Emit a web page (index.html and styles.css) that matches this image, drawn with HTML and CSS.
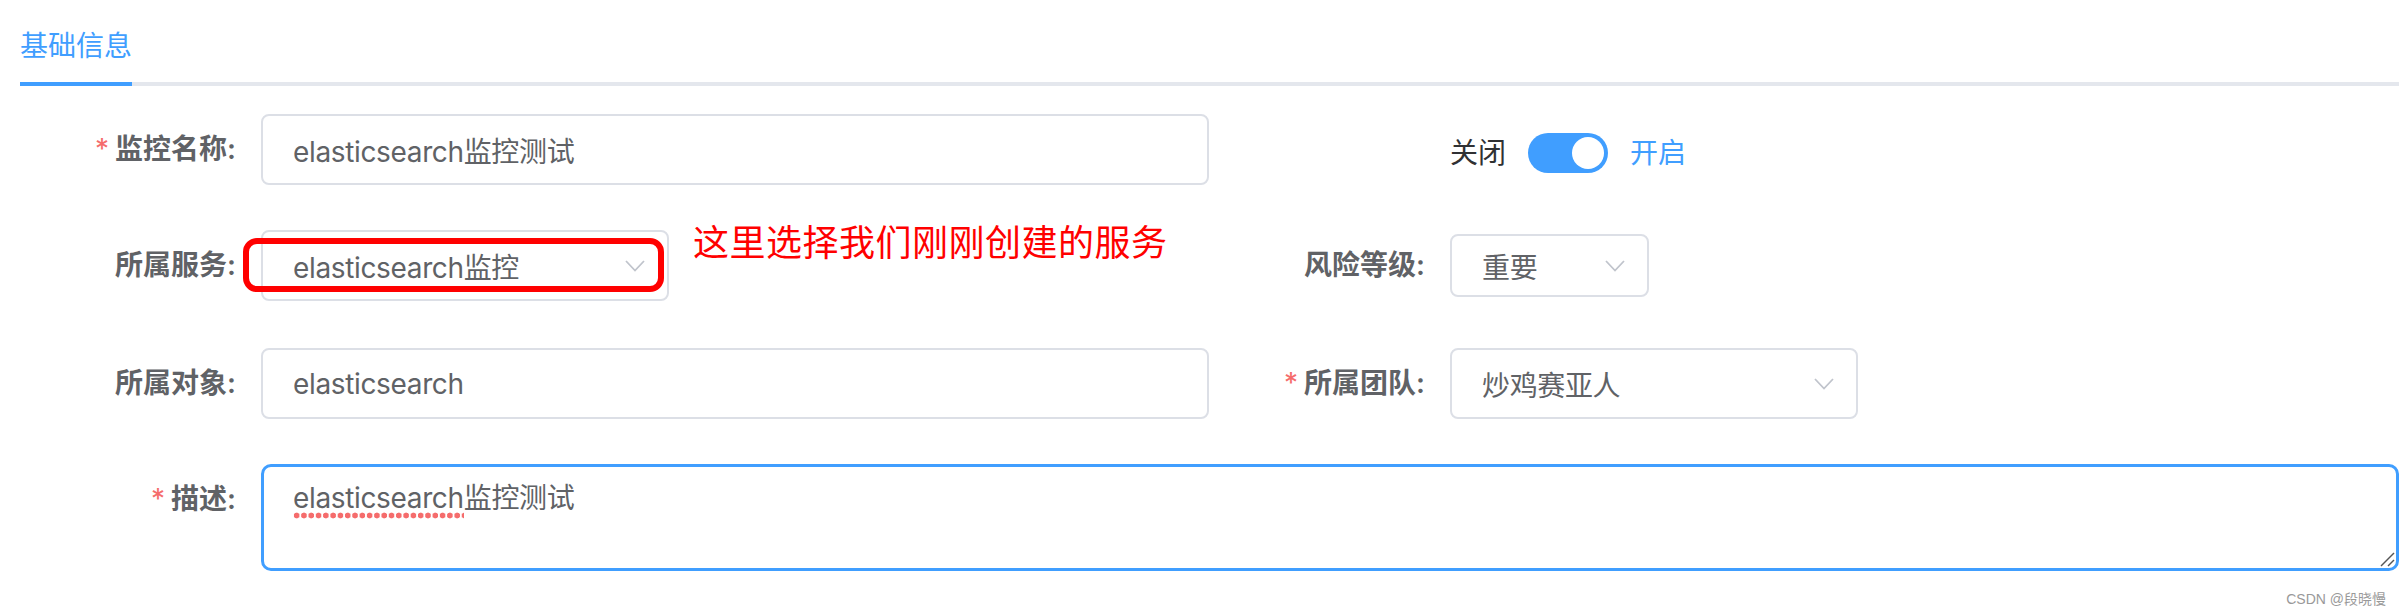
FILE: index.html
```html
<!DOCTYPE html>
<html lang="zh">

<head>
    <meta charset="utf-8">
    <title>监控配置</title>
    <link rel="stylesheet" href="styles.css">
</head>

<body>
    <div class="page">
        <div class="tabs">
            <div class="tab active">基础信息</div>
        </div>

        <div class="form">
            <div class="row">
                <div class="item item-left">
                    <label class="label required">监控名称:</label>
                    <div class="input input-wide">elasticsearch监控测试</div>
                </div>
                <div class="item">
                    <span class="label"></span>
                    <div class="switch-group">
                        <span class="switch-text">关闭</span>
                        <span class="switch"><span class="knob"></span></span>
                        <span class="switch-text active">开启</span>
                    </div>
                </div>
            </div>

            <div class="row row-service">
                <div class="item item-left">
                    <label class="label">所属服务:</label>
                    <div class="select-wrap">
                        <div class="input select select-service">
                            <span>elasticsearch监控</span>
                            <svg class="arrow" viewBox="0 0 20 12"><polyline points="1,1 10,10.5 19,1" /></svg>
                        </div>
                        <div class="mark"></div>
                        <div class="note">这里选择我们刚刚创建的服务</div>
                    </div>
                </div>
                <div class="item">
                    <label class="label">风险等级:</label>
                    <div class="input select select-level">
                        <span>重要</span>
                        <svg class="arrow" viewBox="0 0 20 12"><polyline points="1,1 10,10.5 19,1" /></svg>
                    </div>
                </div>
            </div>

            <div class="row">
                <div class="item item-left">
                    <label class="label">所属对象:</label>
                    <div class="input input-wide">elasticsearch</div>
                </div>
                <div class="item">
                    <label class="label required">所属团队:</label>
                    <div class="input select select-team">
                        <span>炒鸡赛亚人</span>
                        <svg class="arrow" viewBox="0 0 20 12"><polyline points="1,1 10,10.5 19,1" /></svg>
                    </div>
                </div>
            </div>

            <div class="row">
                <div class="item item-full">
                    <label class="label required">描述:</label>
                    <div class="textarea">
                        <span class="typo">elasticsearch</span>监控测试
                        <svg class="grip" viewBox="0 0 15 15">
                            <line x1="1" y1="14" x2="14" y2="1" />
                            <line x1="8" y1="14" x2="14" y2="8" />
                        </svg>
                    </div>
                </div>
            </div>
        </div>

        <div class="watermark">CSDN @段晓慢</div>
    </div>
</body>

</html>
```

FILE: styles.css
```css
body {
    margin: 0;
    background: #fff;
    font-family: Inter, "Noto Sans CJK SC", sans-serif;
    font-size: 28px;
    color: #606266;
}

.page {
    position: relative;
    height: 614px;
    padding: 0 3px 0 20px;
    box-sizing: border-box;
}

/* tabs */
.tabs {
    display: flex;
    border-bottom: 4px solid #e4e7ed;
}

.tab {
    padding: 32px 0 22px;
    margin-bottom: -4px;
    line-height: 28px;
}

.tab.active {
    color: #409eff;
    border-bottom: 4px solid #409eff;
}

/* form */
.form {
    padding-top: 28px;
}

.row {
    display: flex;
    margin-bottom: 45px;
}

.row-service {
    margin-bottom: 47px;
}

.item {
    display: flex;
    align-items: center;
}

.item-left {
    flex: none;
    width: 1189px;
}

.item-full {
    flex: 1;
    align-items: flex-start;
}

.label {
    flex: none;
    width: 216px;
    margin-right: 25px;
    text-align: right;
    line-height: 71px;
    font-weight: 600;
}

.required::before {
    content: '*';
    color: #f56c6c;
    margin-right: 6px;
    font-weight: 400;
}

.input {
    display: flex;
    align-items: center;
    height: 71px;
    padding: 0 30px;
    border: 2px solid #dcdfe6;
    border-radius: 8px;
    box-sizing: border-box;
    white-space: nowrap;
    letter-spacing: -0.35px;
}

.input-wide {
    width: 948px;
}

.select {
    justify-content: space-between;
    padding-right: 22px;
}

.select-service,
.select-team {
    width: 408px;
}

.select-level {
    width: 199px;
    height: 63px;
}

.arrow {
    width: 20px;
    height: 12px;
    fill: none;
    stroke: #c0c4cc;
    stroke-width: 1.8;
}

/* red annotation drawn on the screenshot */
.select-wrap {
    position: relative;
}

.mark {
    position: absolute;
    left: -18px;
    top: 8px;
    width: 421px;
    height: 54px;
    border: 6px solid #ff0000;
    border-radius: 14px;
    box-sizing: border-box;
}

.note {
    position: absolute;
    left: 432px;
    top: -5px;
    font-size: 36px;
    line-height: 36px;
    letter-spacing: 0.5px;
    color: #ff0000;
    white-space: nowrap;
}

/* switch */
.switch-group {
    display: flex;
    align-items: center;
    margin-top: 7px;
}

.switch-text {
    color: #303133;
    line-height: 28px;
}

.switch-text.active {
    color: #409eff;
}

.switch {
    display: flex;
    justify-content: flex-end;
    width: 80px;
    height: 40px;
    margin: 0 22px;
    padding: 4px;
    border-radius: 20px;
    background: #409eff;
    box-sizing: border-box;
}

.knob {
    width: 32px;
    height: 32px;
    border-radius: 50%;
    background: #fff;
}

/* textarea */
.textarea {
    position: relative;
    flex: 1;
    height: 107px;
    padding: 13px 30px 0 29px;
    border: 3px solid #409eff;
    border-radius: 10px;
    box-sizing: border-box;
    line-height: 36px;
    letter-spacing: -0.35px;
}

.typo {
    padding-bottom: 4px;
    background: radial-gradient(circle, #f56c6c 2.7px, transparent 3.2px) repeat-x left bottom;
    background-size: 7.3px 7px;
}

.grip {
    position: absolute;
    right: 1px;
    bottom: 1px;
    width: 15px;
    height: 15px;
    stroke: #555;
    stroke-width: 1.4;
}

.watermark {
    position: absolute;
    right: 16px;
    bottom: 8px;
    font-family: "Liberation Sans", "Noto Sans CJK SC", sans-serif;
    font-size: 14px;
    line-height: 14px;
    color: #999;
}
```
